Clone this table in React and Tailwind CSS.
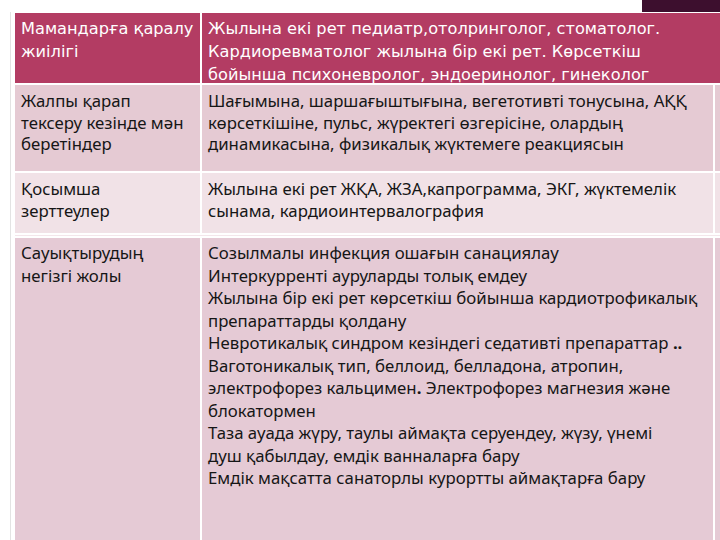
import React from 'react';

const bodyFont = "font-['Noto_Sans',sans-serif]";

const rows = [
    {
        left: ['Жалпы қарап', 'тексеру кезінде мән', 'беретіндер'],
        right: [
            'Шағымына, шаршағыштығына, вегетотивті тонусына, АҚҚ',
            'көрсеткішіне, пульс, жүректегі өзгерісіне, олардың',
            'динамикасына, физикалық жүктемеге реакциясын',
        ],
        bg: 'bg-[#e5cad3]',
        h: 'h-[86px]',
    },
    {
        left: ['Қосымша', 'зерттеулер'],
        right: [
            'Жылына екі рет ЖҚА, ЖЗА,капрограмма, ЭКГ, жүктемелік',
            'сынама, кардиоинтервалография',
        ],
        bg: 'bg-[#f1e2e7]',
        h: 'h-[60px]',
    },
];

const treatment = [
    'Созылмалы инфекция ошағын санациялау',
    'Интеркуррентi ауруларды толық емдеу',
    'Жылына бір екі рет көрсеткіш бойынша кардиотрофикалық',
    'препараттарды қолдану',
    <>Невротикалық синдром кезіндегі седативті препараттар <b>..</b></>,
    'Ваготоникалық тип, беллоид, белладона, атропин,',
    <>электрофорез кальцимен<b>.</b> Электрофорез магнезия және</>,
    'блокатормен',
    'Таза ауада жүру, таулы аймақта серуендеу, жүзу, үнемі',
    'душ қабылдау, емдік ванналарға бару',
    'Емдік мақсатта санаторлы курортты аймақтарға бару',
];

function Lines({ items }) {
    return items.map((t, i) => (
        <div key={i} className="whitespace-nowrap">{t}</div>
    ));
}

export default function App() {
    return (
        <div className="w-[720px] h-[540px] overflow-hidden bg-white flex flex-col">
            <div className="h-[12px] flex justify-end shrink-0">
                <div className="w-[78px] h-full bg-[#3d0f2e]" />
            </div>
            <div className="flex flex-1 min-h-0">
                <div className="w-[10px] shrink-0" />
                <div className="w-px bg-[#e3e3e3] shrink-0" />
                <div className="w-[4px] shrink-0" />
                <div className="flex-1 flex flex-col gap-[2px] pt-px">
                    {/* header */}
                    <div className="flex gap-[2px] h-[70px] shrink-0 font-['DejaVu_Sans',sans-serif] text-[16.2px] leading-[23px] text-white">
                        <div className="w-[185px] bg-[#b33c63] px-[6px] pt-[4px]">
                            <Lines items={['Мамандарға қаралу', 'жиілігі']} />
                        </div>
                        <div className="flex-1 bg-[#b33c63] pl-[6px] pt-[4px]">
                            <Lines items={[
                                'Жылына екі рет педиатр,отолринголог, стоматолог.',
                                'Кардиоревматолог жылына бір екі рет. Көрсеткіш',
                                'бойынша психоневролог, эндоеринолог, гинеколог',
                            ]} />
                        </div>
                    </div>

                    {rows.map((r, i) => (
                        <div key={i} className={`flex gap-[2px] shrink-0 ${r.h} ${bodyFont} text-[16.8px] leading-[21.5px] text-[#161616]`}>
                            <div className={`w-[185px] ${r.bg} px-[6px] pt-[5px]`}>
                                <Lines items={r.left} />
                            </div>
                            <div className={`flex-1 ${r.bg} pl-[6px] pt-[5px]`}>
                                <Lines items={r.right} />
                            </div>
                            <div className={`w-[5px] ${r.bg}`} />
                        </div>
                    ))}

                    <div className="h-px bg-[#f4e6eb] shrink-0" />

                    <div className={`flex gap-[2px] flex-1 ${bodyFont} text-[16.8px] leading-[22.5px] text-[#161616]`}>
                        <div className="w-[185px] bg-[#e5cad5] px-[6px] pt-[4px]">
                            <Lines items={['Сауықтырудың', 'негізгі жолы']} />
                        </div>
                        <div className="flex-1 bg-[#e5cad5] pl-[6px] pt-[4px]">
                            <Lines items={treatment} />
                        </div>
                        <div className="w-[5px] bg-[#e5cad5]" />
                    </div>
                </div>
            </div>
        </div>
    );
}
